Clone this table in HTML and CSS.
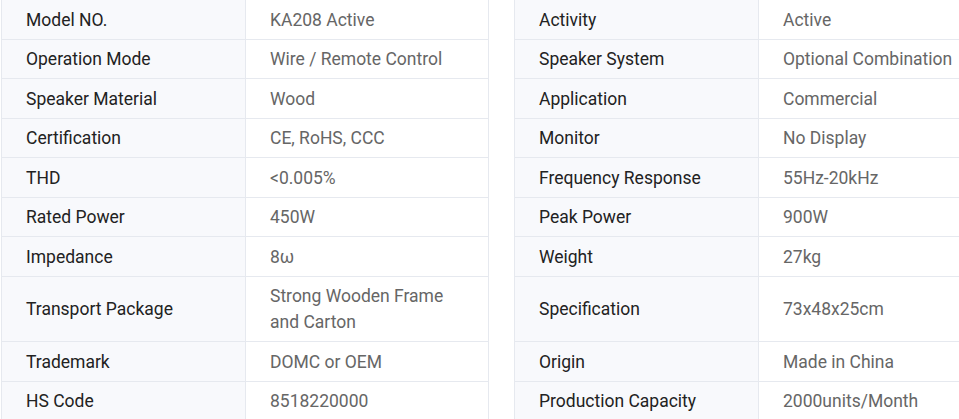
FILE: index.html
```html
<!DOCTYPE html>
<html lang="en">
<head>
<meta charset="utf-8">
<title>Specifications</title>
<link rel="stylesheet" href="styles.css">
</head>
<body>
<table class="spec-table">
  <colgroup>
    <col class="col-label"><col class="col-value"><col class="col-gap"><col class="col-label"><col class="col-value-wide">
  </colgroup>
  <tr><td class="label">Model NO.</td><td class="value">KA208 Active</td><td class="gap"></td><td class="label">Activity</td><td class="value">Active</td></tr>
  <tr><td class="label">Operation Mode</td><td class="value">Wire / Remote Control</td><td class="gap"></td><td class="label">Speaker System</td><td class="value">Optional Combination</td></tr>
  <tr><td class="label">Speaker Material</td><td class="value">Wood</td><td class="gap"></td><td class="label">Application</td><td class="value">Commercial</td></tr>
  <tr><td class="label">Certification</td><td class="value">CE, RoHS, CCC</td><td class="gap"></td><td class="label">Monitor</td><td class="value">No Display</td></tr>
  <tr><td class="label">THD</td><td class="value">&lt;0.005%</td><td class="gap"></td><td class="label">Frequency Response</td><td class="value">55Hz-20kHz</td></tr>
  <tr><td class="label">Rated Power</td><td class="value">450W</td><td class="gap"></td><td class="label">Peak Power</td><td class="value">900W</td></tr>
  <tr><td class="label">Impedance</td><td class="value">8ω</td><td class="gap"></td><td class="label">Weight</td><td class="value">27kg</td></tr>
  <tr><td class="label">Transport Package</td><td class="value">Strong Wooden Frame<br>and Carton</td><td class="gap"></td><td class="label">Specification</td><td class="value">73x48x25cm</td></tr>
  <tr><td class="label">Trademark</td><td class="value">DOMC or OEM</td><td class="gap"></td><td class="label">Origin</td><td class="value">Made in China</td></tr>
  <tr><td class="label">HS Code</td><td class="value">8518220000</td><td class="gap"></td><td class="label">Production Capacity</td><td class="value">2000units/Month</td></tr>
</table>
</body>
</html>
```
FILE: styles.css
```css
html, body {
  margin: 0;
  padding: 0;
  overflow: hidden;
  background: #fff;
}
.spec-table {
  margin-left: 1px;
  margin-top: -1px;
  width: 1060px;
  border-collapse: collapse;
  table-layout: fixed;
  font-family: Roboto, "Liberation Sans", sans-serif;
  font-size: 17.5px;
  line-height: 26px;
}
.col-label { width: 244px; }
.col-value { width: 243px; }
.col-gap { width: 26px; }
.col-value-wide { width: 303px; }
.spec-table td {
  box-sizing: border-box;
  border: 1px solid #e6e9ef;
  padding: 6.75px 24px 5.75px;
  vertical-align: middle;
  white-space: nowrap;
}
.spec-table td.gap {
  padding: 0;
  border-top: hidden;
  border-bottom: hidden;
  border-left: none;
  border-right: none;
  background: #fff;
}
.label {
  background: #f8f9fc;
  color: #222;
}
.value {
  color: #666;
}
```
